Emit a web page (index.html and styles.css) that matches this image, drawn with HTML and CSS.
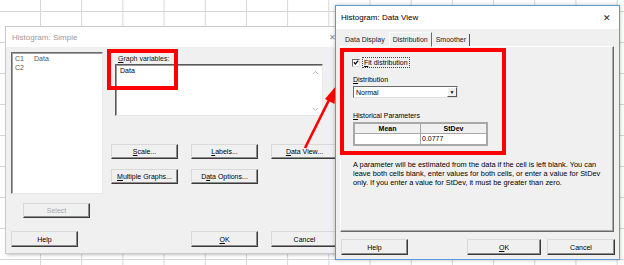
FILE: index.html
```html
<!DOCTYPE html>
<html lang="en">
<head>
    <meta charset="UTF-8">
    <title>Histogram</title>
    <link rel="stylesheet" href="styles.css">
</head>
<body>
    <div class="dialog simple">
        <div class="titlebar">
            <span>Histogram: Simple</span>
            <span class="close">&#x2715;</span>
        </div>
        <div class="body">
            <div class="top">
                <div class="leftcol">
                    <div class="varlist">
                        <div class="var"><span class="colname">C1</span>Data</div>
                        <div class="var"><span class="colname">C2</span></div>
                    </div>
                    <button class="btn select" disabled>Select</button>
                </div>
                <div class="rightcol">
                    <div class="lbl"><u>G</u>raph variables:</div>
                    <div class="vars">
                        <span>Data</span>
                        <div class="scroll">
                            <svg width="7" height="5" viewBox="0 0 7 5"><path d="M1 4 L3.5 1.5 L6 4" fill="none" stroke="#b5b5b5" stroke-width="1"/></svg>
                            <svg width="7" height="5" viewBox="0 0 7 5"><path d="M1 1 L3.5 3.5 L6 1" fill="none" stroke="#b5b5b5" stroke-width="1"/></svg>
                        </div>
                    </div>
                    <div class="btngrid">
                        <button class="btn"><u>S</u>cale...</button>
                        <button class="btn"><u>L</u>abels...</button>
                        <button class="btn"><u>D</u>ata View...</button>
                        <button class="btn"><u>M</u>ultiple Graphs...</button>
                        <button class="btn">D<u>a</u>ta Options...</button>
                    </div>
                </div>
            </div>
            <div class="bottom">
                <button class="btn help">Help</button>
                <button class="btn"><u>O</u>K</button>
                <button class="btn">Cancel</button>
            </div>
        </div>
        <div class="mark mark-vars"></div>
    </div>

    <svg class="arrow" width="50" height="75" viewBox="0 0 50 75">
        <line x1="8" y1="68" x2="33" y2="18" stroke="#ff0000" stroke-width="2.6"/>
        <polygon points="39,6 37.5,24 28,19" fill="#ff0000"/>
    </svg>

    <div class="dialog dataview">
        <div class="titlebar">
            <span>Histogram: Data View</span>
            <span class="close">&#x2715;</span>
        </div>
        <div class="body">
            <div class="tabs">
                <div class="tab">Data Display</div>
                <div class="tab active">Distribution</div>
                <div class="tab last">Smoother</div>
            </div>
            <div class="panel">
                <div class="checkrow">
                    <span class="checkbox">
                        <svg width="7" height="7" viewBox="0 0 7 7"><path d="M1 3.2 L2.8 5.2 L6 1.2" fill="none" stroke="#000" stroke-width="1.4"/></svg>
                    </span>
                    <span class="focus"><u>F</u>it distribution</span>
                </div>
                <div class="lbl2"><u>D</u>istribution</div>
                <div class="dropdown">
                    <span>Normal</span>
                    <span class="drop-btn">&#9660;</span>
                </div>
                <div class="lbl2 hist"><u>H</u>istorical Parameters</div>
                <table class="params">
                    <tr><th>Mean</th><th>StDev</th></tr>
                    <tr><td></td><td>0.0777</td></tr>
                </table>
                <p class="note">A parameter will be estimated from the data if the cell is left blank. You can leave both cells blank, enter values for both cells, or enter a value for StDev only. If you enter a value for StDev, it must be greater than zero.</p>
            </div>
            <div class="bottom">
                <button class="btn help">Help</button>
                <button class="btn ok"><u>O</u>K</button>
                <button class="btn cancel">Cancel</button>
            </div>
        </div>
        <div class="mark mark-dist"></div>
    </div>
</body>
</html>
```

FILE: styles.css
```css
body {
    margin: 0;
    width: 624px;
    height: 265px;
    overflow: hidden;
    position: relative;
    background-color: #fff;
    background-image: linear-gradient(to right, #d6d6d6 1px, transparent 1px),
                      linear-gradient(to bottom, #d6d6d6 1px, transparent 1px);
    background-size: 41.2px 31px;
    background-position: 40px 11px;
    font-family: "Liberation Sans", Arial, sans-serif;
    font-size: 7px;
    color: #000;
}

u {
    text-decoration: underline;
    text-underline-offset: 1px;
}

.dialog {
    position: absolute;
    box-sizing: border-box;
    background-color: #f0f0f0;
}

.dialog .titlebar {
    display: flex;
    align-items: center;
    justify-content: space-between;
    background-color: #fff;
    font-size: 8px;
}

.simple {
    left: 6px;
    top: 27px;
    width: 332px;
    height: 226px;
    box-shadow: 0 0 0 1px #c9c9c9, 1px 2px 3px rgba(0, 0, 0, 0.25);
}

.simple .titlebar {
    height: 20px;
    padding: 0 2px 0 6px;
    color: #9a9a9a;
}

.simple .close {
    font-size: 8px;
    color: #8a8a8a;
}

.simple .body {
    padding: 5px 0 0 5px;
}

.top {
    display: flex;
}

.leftcol {
    display: flex;
    flex-direction: column;
    align-items: flex-start;
}

.varlist {
    box-sizing: border-box;
    width: 92px;
    height: 142px;
    background: #fff;
    border: 1px solid;
    border-color: #6a6a6a #e8e8e8 #e8e8e8 #6a6a6a;
    box-shadow: inset 1px 1px 0 #a0a0a0;
    padding: 2px 3px;
    color: #555;
}

.var {
    line-height: 8.5px;
}

.colname {
    display: inline-block;
    width: 19px;
}

.btn {
    box-sizing: border-box;
    width: 67px;
    height: 15px;
    padding: 0;
    background-color: #f0f0f0;
    border: 1px solid;
    border-color: #d9d9d9 #3a3a3a #3a3a3a #d9d9d9;
    box-shadow: inset -1px -1px 0 #8c8c8c;
    font-family: "Liberation Sans", Arial, sans-serif;
    font-size: 7px;
    color: #000;
    text-align: center;
}

.btn.select {
    margin: 9px 0 0 12px;
    color: #a8a8a8;
}

.rightcol {
    margin-left: 8px;
}

.lbl {
    margin: 2px 0 0 7px;
    line-height: 10px;
    color: #111;
}

.vars {
    box-sizing: border-box;
    display: flex;
    justify-content: space-between;
    width: 208px;
    height: 52px;
    margin-left: 4px;
    background: #fff;
    border: 1px solid;
    border-color: #5a5a5a #e8e8e8 #e8e8e8 #5a5a5a;
    box-shadow: inset 1px 1px 0 #9a9a9a;
    padding: 2px 3px 2px 4px;
}

.scroll {
    display: flex;
    flex-direction: column;
    justify-content: space-between;
    padding: 3px 0 1px;
}

.btngrid {
    display: grid;
    grid-template-columns: 67px 67px 67px;
    column-gap: 13px;
    row-gap: 10px;
    margin-top: 28px;
}

.bottom {
    display: flex;
}

.simple .bottom {
    margin-top: 13px;
    gap: 13px;
}

.simple .bottom .btn {
    height: 16px;
}

.simple .bottom .help {
    margin-right: 100px;
}

.mark {
    position: absolute;
    box-sizing: border-box;
    border: 4px solid #ff0000;
}

.mark-vars {
    left: 101px;
    top: 22px;
    width: 71px;
    height: 41px;
}

.arrow {
    position: absolute;
    left: 297px;
    top: 80px;
}

.dataview {
    left: 335px;
    top: 5px;
    width: 285px;
    height: 255px;
    border: 1px solid #5b9bd5;
    box-shadow: 0 0 4px rgba(0, 0, 0, 0.25);
}

.dataview .titlebar {
    height: 23px;
    padding: 0 8px 0 5px;
}

.dataview .close {
    font-size: 9px;
    color: #222;
}

.dataview .body {
    padding: 2px 0 0 4px;
}

.tabs {
    display: flex;
    align-items: flex-end;
    height: 15px;
    padding-left: 2px;
}

.tab {
    box-sizing: border-box;
    height: 12px;
    line-height: 11px;
    padding: 0 3px;
    color: #222;
}

.tab.active {
    height: 15px;
    line-height: 13px;
    margin: 0 1px;
    border: 1px solid;
    border-color: #fff #6a6a6a #f0f0f0 #fff;
    position: relative;
    top: 1px;
}

.tab.last {
    border-right: 1px solid #555;
}

.panel {
    box-sizing: border-box;
    width: 274px;
    height: 186px;
    border: 1px solid;
    border-color: #fff #6a6a6a #6a6a6a #fff;
    box-shadow: inset -1px -1px 0 #a8a8a8;
    padding: 10px 0 0 11px;
}

.checkrow {
    display: flex;
    align-items: center;
    height: 11px;
}

.checkbox {
    box-sizing: border-box;
    display: flex;
    align-items: center;
    justify-content: center;
    width: 8px;
    height: 8px;
    background: #fff;
    border: 1px solid;
    border-color: #6a6a6a #e0e0e0 #e0e0e0 #6a6a6a;
}

.focus {
    margin-left: 2px;
    padding: 0 1px;
    line-height: 9px;
    border: 1px dotted #444;
}

.lbl2 {
    margin: 7px 0 0 1px;
    line-height: 9px;
}

.dropdown {
    box-sizing: border-box;
    display: flex;
    justify-content: space-between;
    align-items: center;
    width: 105px;
    height: 12px;
    margin: 2px 0 0 1px;
    background: #fff;
    border: 1px solid;
    border-color: #6a6a6a #e0e0e0 #e0e0e0 #6a6a6a;
    padding-left: 2px;
}

.drop-btn {
    box-sizing: border-box;
    display: flex;
    align-items: center;
    justify-content: center;
    width: 10px;
    height: 10px;
    background: #f0f0f0;
    border: 1px solid;
    border-color: #fff #555 #555 #fff;
    font-size: 5px;
}

.lbl2.hist {
    margin-top: 13px;
}

.params {
    margin: 2px 0 0 1px;
    width: 135px;
    border-collapse: collapse;
    border: 2px solid #a8a8a8;
    font-size: 7px;
}

.params th {
    height: 9px;
    padding: 0;
    background: #f0f0f0;
    border: 1px solid #a8a8a8;
    font-weight: bold;
    line-height: 9px;
}

.params td {
    height: 10px;
    padding: 0 0 0 1px;
    background: #fff;
    border: 1px solid #a8a8a8;
    line-height: 10px;
    width: 50%;
}

.note {
    width: 250px;
    margin: 14px 0 0 1px;
    font-size: 7.4px;
    line-height: 9.2px;
}

.dataview .bottom {
    margin-top: 7px;
}

.dataview .bottom .btn {
    height: 16px;
}

.dataview .bottom .help {
    margin-left: 1px;
}

.dataview .bottom .ok {
    width: 74px;
    margin-left: 59px;
}

.dataview .bottom .cancel {
    width: 68px;
    margin-left: 6px;
}

.mark-dist {
    left: 4px;
    top: 42px;
    width: 166px;
    height: 107px;
}
```
